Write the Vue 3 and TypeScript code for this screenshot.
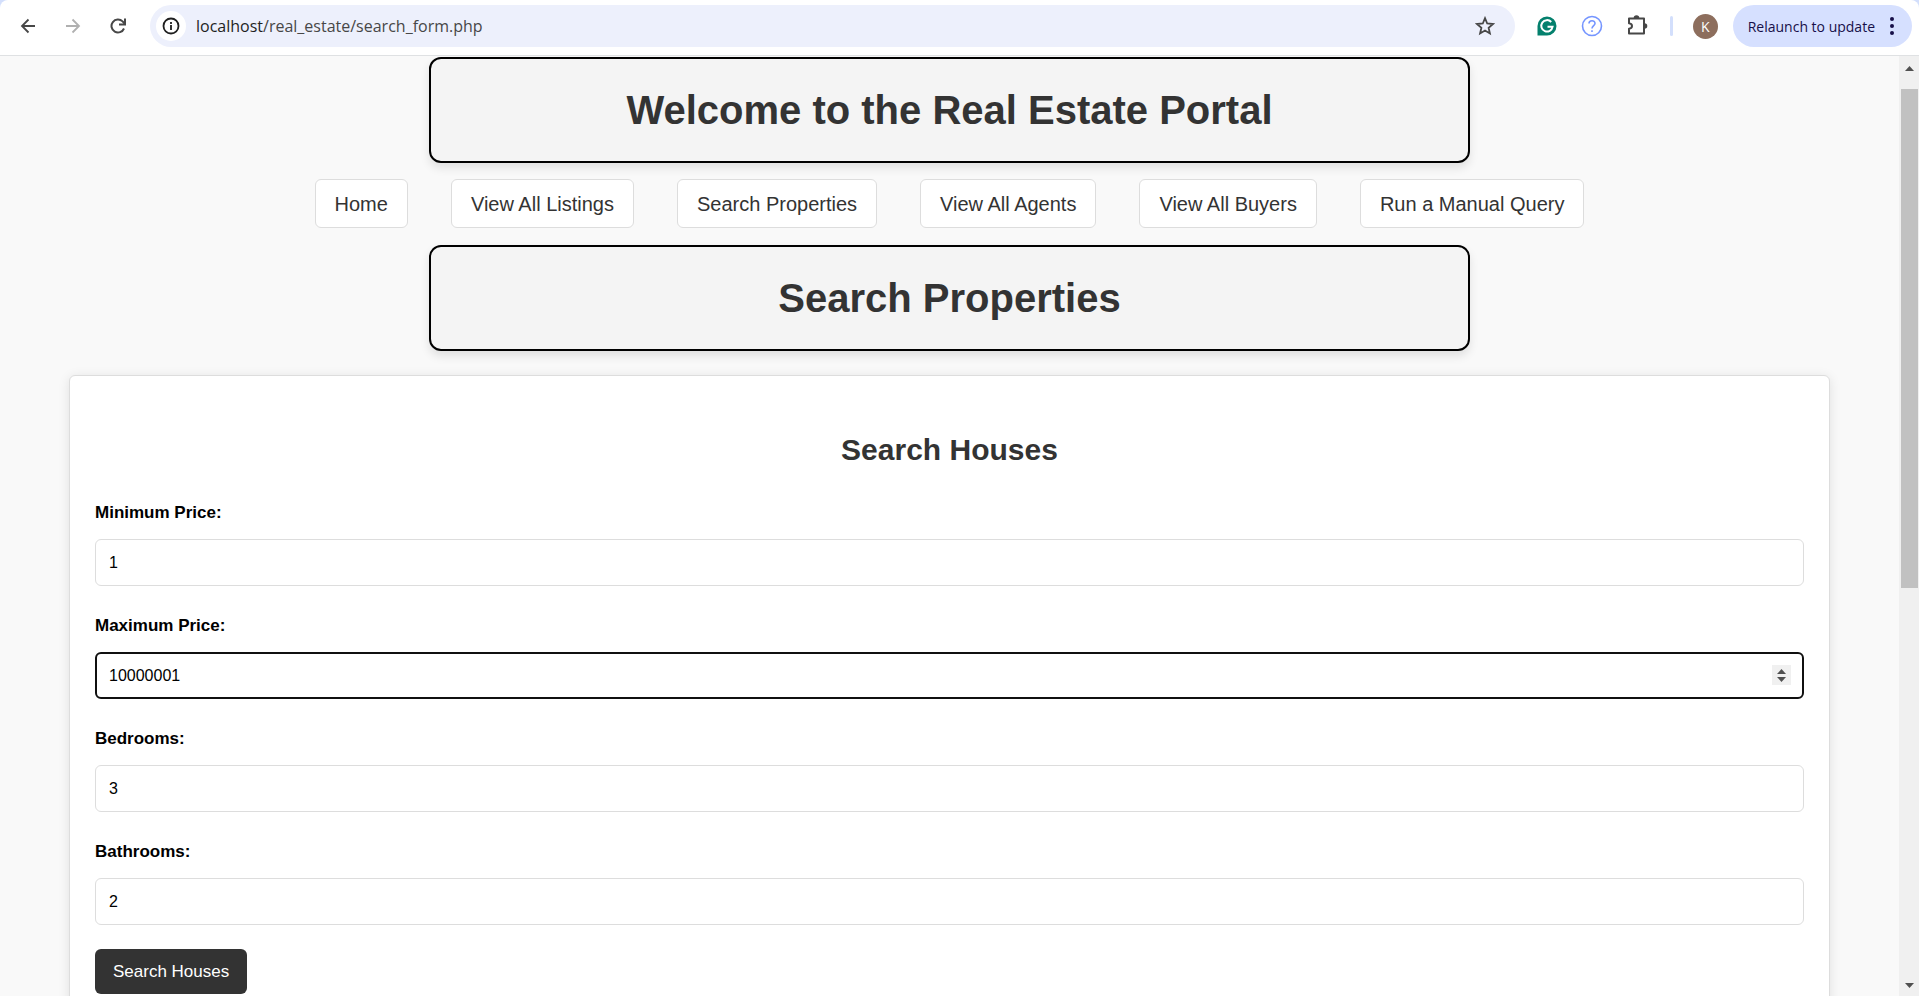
<script setup lang="ts">
import { reactive, ref } from 'vue'

interface Field {
  id: string
  label: string
  value: number
}

const links: string[] = [
  'Home',
  'View All Listings',
  'Search Properties',
  'View All Agents',
  'View All Buyers',
  'Run a Manual Query',
]

const fields = reactive<Field[]>([
  { id: 'min-price', label: 'Minimum Price:', value: 1 },
  { id: 'max-price', label: 'Maximum Price:', value: 10000001 },
  { id: 'bedrooms', label: 'Bedrooms:', value: 3 },
  { id: 'bathrooms', label: 'Bathrooms:', value: 2 },
])

const activeId = ref('max-price')
</script>

<template>
  <div class="window">
    <header class="toolbar">
      <button class="tool" type="button" aria-label="Back">
        <svg width="16" height="16" viewBox="0 0 16 16" fill="none" stroke="#474747" stroke-width="1.800">
          <path d="M15 8H2M8.500 1.500 2 8l6.500 6.500" />
        </svg>
      </button>
      <button class="tool" type="button" aria-label="Forward">
        <svg width="16" height="16" viewBox="0 0 16 16" fill="none" stroke="#b0b0b0" stroke-width="1.800">
          <path d="M1 8h13M7.500 1.500 14 8l-6.500 6.500" />
        </svg>
      </button>
      <button class="tool" type="button" aria-label="Reload">
        <svg width="16" height="16" viewBox="0 0 16 16" fill="none" stroke="#474747" stroke-width="2">
          <path d="M14 10.500A6.500 6.500 0 1 1 12.600 3.400L14.500 5.500" />
          <path d="M15 .5v6H9" />
        </svg>
      </button>

      <div class="address">
        <button class="site-info" type="button" aria-label="Site information">
          <svg width="18" height="18" viewBox="0 0 18 18" fill="none" stroke="#1f1f1f" stroke-width="1.800">
            <circle cx="9" cy="9" r="7.500" />
            <path d="M9 8v5M9 5v2" />
          </svg>
        </button>
        <span class="url"><b>localhost</b>/real_estate/search_form.php</span>
        <button class="star" type="button" aria-label="Bookmark this page">
          <svg width="20" height="20" viewBox="0 0 20 20" fill="none" stroke="#474747" stroke-width="1.800">
            <path d="M10 2.200 12.200 7.500 18 8l-4.400 3.800 1.300 5.600L10 14.500l-4.900 2.900 1.300-5.600L2 8l5.800-.5z" />
          </svg>
        </button>
      </div>

      <div class="extensions">
        <button class="tool" type="button" aria-label="Writing assistant">
          <svg width="20" height="20" viewBox="0 0 20 20" fill="none">
            <path d="M10 .5A9.500 9.500 0 1 1 10 19.500H.5V10A9.500 9.500 0 0 1 10 .5z" fill="#04806d" />
            <path d="M14.200 6A5.700 5.700 0 1 0 15.600 10.700H10.500" stroke="#fff" stroke-width="2" />
          </svg>
        </button>
        <button class="tool" type="button" aria-label="Help">
          <svg width="22" height="22" viewBox="0 0 22 22" fill="none" stroke="#7595ff" stroke-width="1.600">
            <circle cx="11" cy="11" r="9.500" />
            <path d="M8 8.500C8 4.800 14 4.800 14 8.400c0 2-3 2.500-3 5M11 15.200v1.800" />
          </svg>
        </button>
        <button class="tool" type="button" aria-label="Extensions">
          <svg class="puzzle" width="22" height="22" viewBox="0 0 22 22" fill="none">
            <path d="M3 4.500h15v15H3v-4.700c4-.6 4-5 0-5.600z" stroke="#474747" stroke-width="2" stroke-linejoin="round" />
            <path d="M7.700 4a2.800 2.800 0 0 1 5.600 0zM18.500 9.200a2.800 2.800 0 0 1 0 5.600z" fill="#474747" />
          </svg>
        </button>
      </div>
      <span class="divider"></span>
      <button class="avatar" type="button" aria-label="Profile">K</button>
      <button class="relaunch" type="button">
        <span>Relaunch to update</span>
        <svg width="4" height="18" viewBox="0 0 4 18" fill="#170f49">
          <circle cx="2" cy="2" r="2" />
          <circle cx="2" cy="9" r="2" />
          <circle cx="2" cy="16" r="2" />
        </svg>
      </button>
    </header>

    <div class="viewport">
      <main class="page">
        <h1 class="banner">Welcome to the Real Estate Portal</h1>
        <nav class="links">
          <a v-for="link in links" :key="link" href="#">{{ link }}</a>
        </nav>
        <h1 class="banner">Search Properties</h1>

        <form class="card" @submit.prevent>
          <h2>Search Houses</h2>
          <div v-for="field in fields" :key="field.id" class="field">
            <label :for="field.id">{{ field.label }}</label>
            <div class="control" :class="{ active: field.id === activeId }">
              <input :id="field.id" v-model.number="field.value" type="number" @focus="activeId = field.id" />
              <div v-if="field.id === activeId" class="spinner">
                <button type="button" aria-label="Increase" tabindex="-1" @click="field.value++">
                  <svg width="9" height="5" viewBox="0 0 9 5"><path d="M0 5 4.500 0 9 5z" fill="#505050" /></svg>
                </button>
                <button type="button" aria-label="Decrease" tabindex="-1" @click="field.value--">
                  <svg width="9" height="5" viewBox="0 0 9 5"><path d="M0 0h9L4.500 5z" fill="#505050" /></svg>
                </button>
              </div>
            </div>
          </div>
          <button class="submit" type="submit">Search Houses</button>
        </form>
      </main>

      <div class="scrollbar" aria-hidden="true">
        <svg width="9" height="5" viewBox="0 0 9 5"><path d="M0 5 4.500 0 9 5z" fill="#505050" /></svg>
        <div class="track"><div class="thumb"></div></div>
        <svg width="9" height="5" viewBox="0 0 9 5"><path d="M0 0h9L4.500 5z" fill="#505050" /></svg>
      </div>
    </div>
  </div>
</template>

<style>
body {
  margin: 0;
  background: #d3dffc;
}
</style>

<style scoped>
* {
  box-sizing: border-box;
}

button {
  margin: 0;
  padding: 0;
  border: 0;
  background: none;
  font: inherit;
  color: inherit;
  cursor: pointer;
}

svg {
  display: block;
}

.window {
  display: flex;
  flex-direction: column;
  height: 100vh;
  overflow: hidden;
  font-family: Arial, 'Liberation Sans', sans-serif;
}

.toolbar {
  display: flex;
  flex: none;
  align-items: center;
  padding: 5px 7px 8px 5px;
  border-bottom: 1px solid #dfe1e3;
  border-radius: 8px 8px 0 0;
  background: #fff;
  font-family: 'Open Sans', 'Noto Sans', sans-serif;
}

.tool {
  display: flex;
  width: 45px;
  height: 42px;
  align-items: center;
  justify-content: center;
}

.address {
  display: flex;
  flex: 1;
  align-items: center;
  height: 42px;
  margin: 0 10px;
  padding: 0 20px 0 6px;
  border-radius: 21px;
  background: #edf0fc;
}

.site-info {
  display: flex;
  width: 30px;
  height: 30px;
  align-items: center;
  justify-content: center;
  border-radius: 50%;
  background: #fff;
}

.url {
  flex: 1;
  margin-left: 10px;
  font-size: 16px;
  line-height: 24px;
  color: #474747;
}

.url b {
  font-weight: 400;
  color: #1f1f1f;
}

.extensions {
  display: flex;
}

.puzzle {
  margin-bottom: 2px;
}

.divider {
  width: 3px;
  height: 20px;
  margin: 0 20px 0 10px;
  border-radius: 2px;
  background: #d3dffc;
}

.avatar {
  width: 25px;
  height: 25px;
  border-radius: 50%;
  background: #8d6e5d;
  color: #fff;
  font-size: 14px;
  line-height: 25px;
}

.relaunch {
  display: flex;
  align-items: center;
  gap: 15px;
  height: 42px;
  margin-left: 15px;
  padding: 0 18px 0 15px;
  border-radius: 21px;
  background: #d6e0ff;
  color: #170f49;
  font-size: 14px;
}

.viewport {
  display: flex;
  flex: 1;
  min-height: 0;
  background: #f9f9f9;
}

.page {
  flex: 1;
  min-width: 0;
  overflow: hidden;
  padding: 1px 69px 0;
}

.banner {
  max-width: 1041px;
  margin: 0 auto;
  padding: 25px;
  border: 2px solid #000;
  border-radius: 12px;
  background: #f4f4f4;
  box-shadow: 0 5px 10px rgba(0, 0, 0, 0.1);
  color: #333;
  font-size: 40px;
  line-height: 52px;
  text-align: center;
}

.links {
  display: flex;
  flex-wrap: wrap;
  justify-content: center;
  gap: 16px 43px;
  margin: 16px 0 17px;
}

.links a {
  padding: 13px 19px 11px;
  border: 1px solid #ddd;
  border-radius: 6px;
  background: #fff;
  color: #333;
  font-size: 20px;
  line-height: 23px;
  text-decoration: none;
}

.card {
  margin-top: 24px;
  padding: 25px;
  border: 1px solid #ddd;
  border-radius: 6px;
  background: #fff;
  box-shadow: 0 2px 12px rgba(0, 0, 0, 0.1);
}

.card h2 {
  margin: 32px 0 36px;
  color: #333;
  font-size: 30px;
  line-height: 34px;
  text-align: center;
}

.field {
  margin-bottom: 30px;
}

.field:last-of-type {
  margin-bottom: 24px;
}

.field label {
  display: block;
  margin-bottom: 16px;
  color: #000;
  font-size: 17px;
  font-weight: 700;
  line-height: 20px;
}

.control {
  position: relative;
}

.control input {
  display: block;
  width: 100%;
  height: 47px;
  padding: 0 13px;
  border: 1px solid #ddd;
  border-radius: 6px;
  outline: 0;
  background: #fff;
  color: #000;
  font-family: inherit;
  font-size: 16px;
  appearance: textfield;
}

.control input::-webkit-inner-spin-button {
  display: none;
}

.control.active input {
  padding: 0 12px;
  border: 2px solid #101010;
}

.spinner {
  position: absolute;
  top: 13px;
  right: 13px;
  display: flex;
  flex-direction: column;
  width: 19px;
  background: #f0f0f0;
}

.spinner button {
  display: flex;
  align-items: flex-end;
  justify-content: center;
  height: 10px;
  padding-bottom: 1px;
}

.spinner button + button {
  align-items: flex-start;
  padding: 2px 0 0;
}

.submit {
  display: block;
  padding: 12px 18px;
  border-radius: 6px;
  background: #333;
  color: #fff;
  font-size: 17px;
  line-height: 21px;
}

.scrollbar {
  display: flex;
  flex-direction: column;
  align-items: center;
  width: 20px;
  padding: 10px 0 8px;
  background: #f0f0f0;
}

.track {
  flex: 1;
  padding: 18px 0;
}

.thumb {
  width: 17px;
  height: 57%;
  background: #c1c1c1;
}
</style>
